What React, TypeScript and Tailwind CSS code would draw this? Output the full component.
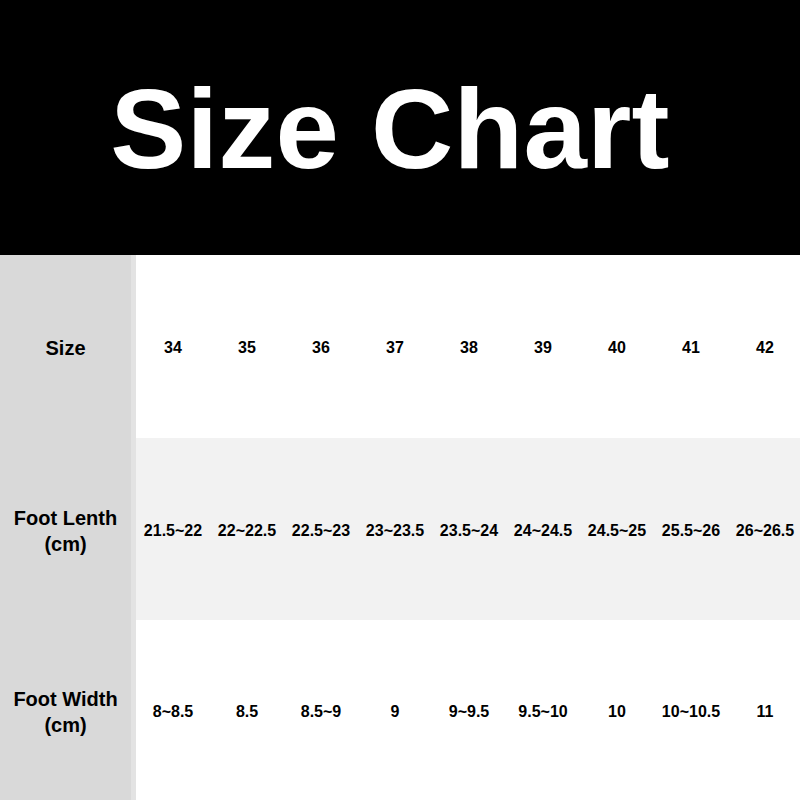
const sizes = ['34', '35', '36', '37', '38', '39', '40', '41', '42']
const lengths = ['21.5~22', '22~22.5', '22.5~23', '23~23.5', '23.5~24', '24~24.5', '24.5~25', '25.5~26', '26~26.5']
const widths = ['8~8.5', '8.5', '8.5~9', '9', '9~9.5', '9.5~10', '10', '10~10.5', '11']

const rows = [
  { label: ['Size'], values: sizes, bg: 'bg-white', h: 'h-[183px]' },
  { label: ['Foot Lenth', '(cm)'], values: lengths, bg: 'bg-[#f2f2f2]', h: 'h-[182px]' },
  { label: ['Foot Width', '(cm)'], values: widths, bg: 'bg-white', h: 'h-[180px]' },
]

function App() {
  return (
    <div className="w-[800px] h-[800px] overflow-hidden bg-white font-['Liberation_Sans',Arial,sans-serif] font-bold text-black">
      {/* Header */}
      <div className="h-[255px] bg-black flex items-center justify-center pr-[20px]">
        <h1 className="text-white text-[114px] leading-none tracking-[0.2px] mt-[2px]">Size Chart</h1>
      </div>

      {/* Table */}
      {rows.map((row, i) => (
        <div key={i} className={`flex ${row.h}`}>
          <div className="w-[131px] shrink-0 bg-[#d9d9d9] flex flex-col items-center justify-center text-[20px] leading-[26px] pt-[3px]">
            {row.label.map((l) => (
              <span key={l}>{l}</span>
            ))}
          </div>
          <div className="w-[5px] shrink-0 bg-[#e3e3e3]" />
          <div className={`flex-1 grid grid-cols-[repeat(9,74px)] ${row.bg}`}>
            {row.values.map((v, j) => (
              <div key={j} className="flex items-center justify-center text-[16px] pt-[3px] whitespace-nowrap">
                {v}
              </div>
            ))}
          </div>
        </div>
      ))}
    </div>
  )
}

export default App
